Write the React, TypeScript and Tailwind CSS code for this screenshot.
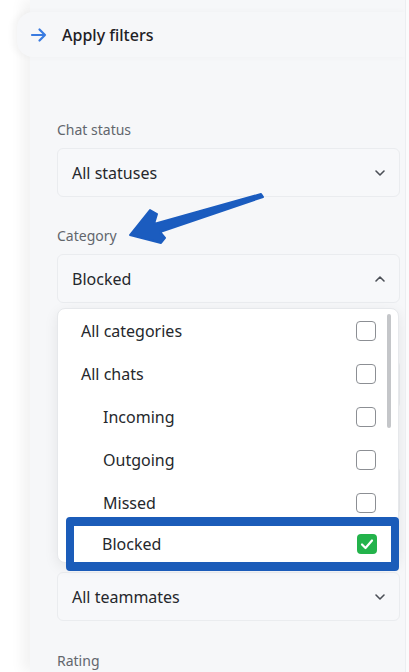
import React from "react";

const Chevron = ({ up = false }: { up?: boolean }) => (
  <svg width="12" height="8" viewBox="0 0 12 8" className="shrink-0">
    <path
      d={up ? "M2 6 L6 2 L10 6" : "M2 2 L6 6 L10 2"}
      fill="none"
      stroke="#4b4f56"
      strokeWidth="1.6"
      strokeLinecap="round"
      strokeLinejoin="round"
    />
  </svg>
);

const Select = ({ value, up = false, className = "" }: { value: string; up?: boolean; className?: string }) => (
  <div
    className={`flex items-center justify-between h-[49px] pl-[14px] pr-[13px] rounded-[6px] border border-[#eaecef] bg-[#f7f8fa] text-[16px] text-[#25282c] ${className}`}
  >
    <span>{value}</span>
    <Chevron up={up} />
  </div>
);

const Label = ({ text, className = "" }: { text: string; className?: string }) => (
  <div className={`h-[20px] leading-[20px] text-[14px] text-[#62666d] ${className}`}>{text}</div>
);

const Box = () => (
  <div className="w-[20px] h-[20px] rounded-[4px] border border-[#8c8f94] bg-white shrink-0" />
);

const Item = ({ label, indent = false }: { label: string; indent?: boolean }) => (
  <div className="flex items-center justify-between h-[43px] pr-[22px]">
    <span className={`${indent ? "pl-[45px]" : "pl-[23px]"} text-[16px] text-[#25282c]`}>{label}</span>
    <Box />
  </div>
);

export default function App() {
  return (
    <div
      className="relative w-[409px] h-[672px] bg-white overflow-hidden flex"
      style={{ fontFamily: '"Noto Sans", "Open Sans", Arial, sans-serif' }}
    >
      {/* left white strip */}
      <div className="w-[30px] shrink-0 bg-white" />
      {/* panel */}
      <div className="relative flex-1 bg-[#f6f7f9] shadow-[-8px_0_12px_rgba(0,0,0,0.05)] flex flex-col">
        {/* header tab */}
        <div className="mt-[12px] -ml-[13px] h-[45px] rounded-l-[16px] bg-[#f6f7f9] shadow-[-5px_0_6px_rgba(0,0,0,0.035)] flex items-center pl-[13px]">
          <svg width="18" height="16" viewBox="0 0 18 16" className="shrink-0">
            <path
              d="M2 8 H15 M9.5 2.5 L15 8 L9.5 13.5"
              fill="none"
              stroke="#3a7be0"
              strokeWidth="2.2"
              strokeLinecap="round"
              strokeLinejoin="round"
            />
          </svg>
          <span className="ml-[14px] text-[16px] font-medium text-[#1e2024]">Apply filters</span>
        </div>

        {/* content */}
        <div className="relative ml-[27px] mr-[9px] flex flex-col">
          <Label text="Chat status" className="mt-[63px]" />
          <Select value="All statuses" className="mt-[8px]" />

          <Label text="Category" className="mt-[29px]" />
          <Select value="Blocked" up className="mt-[8px]" />

          {/* filters hidden behind the open dropdown */}
          <div className="mt-[29px] h-[20px]" />
          <div className="mt-[8px] h-[49px] rounded-[6px] border border-[#eaecef] bg-[#f7f8fa]" />
          <div className="mt-[29px] h-[20px]" />
          <div className="mt-[8px] h-[49px] rounded-[6px] border border-[#eaecef] bg-[#f7f8fa]" />
          <div className="mt-[29px] h-[20px]" />
          <Select value="All teammates" className="mt-[8px]" />

          <Label text="Rating" className="mt-[30px]" />

          {/* dropdown overlay */}
          <div className="absolute left-0 top-[251px] w-[342px] h-[255px] bg-white rounded-[8px] border border-[#e6e8eb] shadow-[0_4px_14px_rgba(0,0,0,0.08)] overflow-hidden">
            <Item label="All categories" />
            <Item label="All chats" />
            <Item label="Incoming" indent />
            <Item label="Outgoing" indent />
            <Item label="Missed" indent />
            <div className="absolute right-[7px] top-[5px] w-[4px] h-[114px] rounded-full bg-[#c4c6c9]" />
          </div>

          {/* highlighted Blocked row */}
          <div className="absolute left-[9px] top-[460px] w-[333px] h-[54px] rounded-[4px] border-x-[8px] border-y-[9px] border-[#1b5cb9] bg-white flex items-center justify-between">
            <span className="pl-[28px] text-[16px] text-[#25282c]">Blocked</span>
            <div className="mr-[14px] w-[20px] h-[20px] rounded-[4px] bg-[#23b34b] flex items-center justify-center">
              <svg width="14" height="12" viewBox="0 0 14 12">
                <path d="M2 6.5 L5.5 10 L12 2.5" fill="none" stroke="white" strokeWidth="2.2" strokeLinecap="round" strokeLinejoin="round" />
              </svg>
            </div>
          </div>
        </div>

        {/* right edge strip */}
        <div className="absolute right-0 top-0 bottom-0 w-[4px] bg-[#fbfbfc] border-l border-[#eceef1]" />
      </div>

      {/* annotation arrow */}
      <svg className="absolute left-0 top-0 pointer-events-none" width="409" height="672" viewBox="0 0 409 672">
        <polygon
          points="130,235 150,210 157,214 154,224 261,194 263,197 160,232 165,238 161,243"
          fill="#1b5cbf"
          stroke="#1b5cbf"
          strokeWidth="2"
          strokeLinejoin="round"
        />
      </svg>
    </div>
  );
}
